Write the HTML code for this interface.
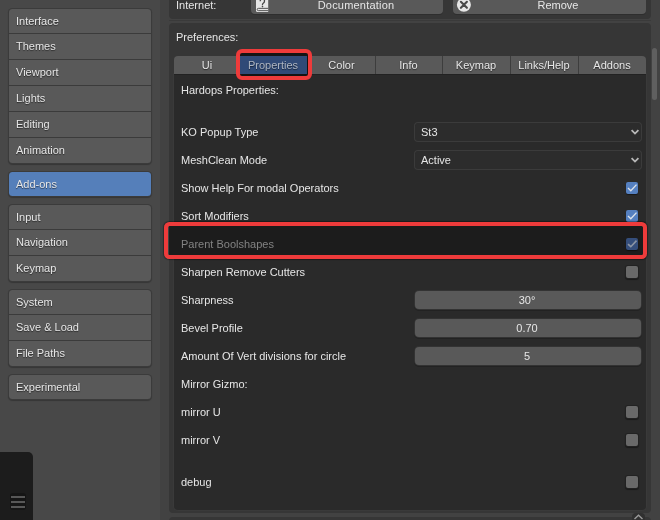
<!DOCTYPE html>
<html><head><meta charset="utf-8"><style>
html,body{margin:0;padding:0;width:660px;height:520px;overflow:hidden;background:#424242;}
.r{position:absolute;}
.t{position:absolute;will-change:transform;font-family:"Liberation Sans",sans-serif;font-size:11px;line-height:12px;white-space:nowrap;}
</style></head><body>
<div class="r" style="left:0px;top:0px;width:160px;height:520px;background:#484848;"></div>
<div class="r" style="left:160px;top:0px;width:500px;height:520px;background:#424242;"></div>
<div class="r" style="left:169px;top:-10px;width:482px;height:28.5px;background:#363636;border-radius:0 0 4px 4px;"></div>
<div class="r" style="left:169px;top:22.5px;width:482px;height:490.5px;background:#363636;border-radius:4px;"></div>
<div class="r" style="left:169px;top:19.8px;width:482px;height:1.2px;background:#3a3a3a;"></div>
<div class="r" style="left:169px;top:517px;width:482px;height:20px;background:#363636;border-radius:4px;"></div>
<div class="r" style="left:9px;top:9px;width:142px;height:154px;background:#595959;border-radius:3.5px;box-shadow:0 0 0 1px #3b3b3b, 0 1px 1px 1px rgba(0,0,0,.25);"></div>
<div class="t" style="left:15.5px;top:15px;color:#e6e6e6;text-shadow:0 1px 1px rgba(0,0,0,.55);">Interface</div>
<div class="r" style="left:9px;top:33px;width:142px;height:1px;background:#3b3b3b;"></div>
<div class="t" style="left:15.5px;top:40px;color:#e6e6e6;text-shadow:0 1px 1px rgba(0,0,0,.55);">Themes</div>
<div class="r" style="left:9px;top:59px;width:142px;height:1px;background:#3b3b3b;"></div>
<div class="t" style="left:15.5px;top:66px;color:#e6e6e6;text-shadow:0 1px 1px rgba(0,0,0,.55);">Viewport</div>
<div class="r" style="left:9px;top:85px;width:142px;height:1px;background:#3b3b3b;"></div>
<div class="t" style="left:15.5px;top:92px;color:#e6e6e6;text-shadow:0 1px 1px rgba(0,0,0,.55);">Lights</div>
<div class="r" style="left:9px;top:111px;width:142px;height:1px;background:#3b3b3b;"></div>
<div class="t" style="left:15.5px;top:118px;color:#e6e6e6;text-shadow:0 1px 1px rgba(0,0,0,.55);">Editing</div>
<div class="r" style="left:9px;top:137px;width:142px;height:1px;background:#3b3b3b;"></div>
<div class="t" style="left:15.5px;top:144px;color:#e6e6e6;text-shadow:0 1px 1px rgba(0,0,0,.55);">Animation</div>
<div class="r" style="left:9px;top:172px;width:142px;height:24px;background:#557fba;border-radius:3.5px;box-shadow:0 0 0 1px #3b3b3b, 0 1px 1px 1px rgba(0,0,0,.25);"></div>
<div class="t" style="left:15.5px;top:178px;color:#e6e6e6;text-shadow:0 1px 1px rgba(0,0,0,.55);">Add-ons</div>
<div class="r" style="left:9px;top:205px;width:142px;height:76px;background:#595959;border-radius:3.5px;box-shadow:0 0 0 1px #3b3b3b, 0 1px 1px 1px rgba(0,0,0,.25);"></div>
<div class="t" style="left:15.5px;top:211px;color:#e6e6e6;text-shadow:0 1px 1px rgba(0,0,0,.55);">Input</div>
<div class="r" style="left:9px;top:229px;width:142px;height:1px;background:#3b3b3b;"></div>
<div class="t" style="left:15.5px;top:236px;color:#e6e6e6;text-shadow:0 1px 1px rgba(0,0,0,.55);">Navigation</div>
<div class="r" style="left:9px;top:255px;width:142px;height:1px;background:#3b3b3b;"></div>
<div class="t" style="left:15.5px;top:262px;color:#e6e6e6;text-shadow:0 1px 1px rgba(0,0,0,.55);">Keymap</div>
<div class="r" style="left:9px;top:290px;width:142px;height:76px;background:#595959;border-radius:3.5px;box-shadow:0 0 0 1px #3b3b3b, 0 1px 1px 1px rgba(0,0,0,.25);"></div>
<div class="t" style="left:15.5px;top:296px;color:#e6e6e6;text-shadow:0 1px 1px rgba(0,0,0,.55);">System</div>
<div class="r" style="left:9px;top:314px;width:142px;height:1px;background:#3b3b3b;"></div>
<div class="t" style="left:15.5px;top:321px;color:#e6e6e6;text-shadow:0 1px 1px rgba(0,0,0,.55);">Save &amp; Load</div>
<div class="r" style="left:9px;top:340px;width:142px;height:1px;background:#3b3b3b;"></div>
<div class="t" style="left:15.5px;top:347px;color:#e6e6e6;text-shadow:0 1px 1px rgba(0,0,0,.55);">File Paths</div>
<div class="r" style="left:9px;top:375px;width:142px;height:24px;background:#595959;border-radius:3.5px;box-shadow:0 0 0 1px #3b3b3b, 0 1px 1px 1px rgba(0,0,0,.25);"></div>
<div class="t" style="left:15.5px;top:381px;color:#e6e6e6;text-shadow:0 1px 1px rgba(0,0,0,.55);">Experimental</div>
<div class="r" style="left:0px;top:452px;width:33px;height:80px;background:#1c1c1c;border-radius:0 5px 0 0;"></div>
<div class="r" style="left:9.5px;top:493px;width:16.5px;height:17px;background:#151515;border-radius:3px;"></div>
<div class="r" style="left:11px;top:496px;width:14px;height:2px;background:#575757;"></div>
<div class="r" style="left:11px;top:501px;width:14px;height:2px;background:#575757;"></div>
<div class="r" style="left:11px;top:506px;width:14px;height:2px;background:#575757;"></div>
<div class="t" style="left:176px;top:-1px;color:#e6e6e6;">Internet:</div>
<div class="r" style="left:251px;top:-6px;width:192px;height:20px;background:#595959;border-radius:4px;box-shadow:0 1px 0 0 #2e2e2e;"></div>
<div class="r" style="left:453px;top:-6px;width:193px;height:20px;background:#595959;border-radius:4px;box-shadow:0 1px 0 0 #2e2e2e;"></div>
<div class="t" style="left:295.7px;width:120px;text-align:center;top:-1px;color:#e6e6e6;letter-spacing:0.2px;">Documentation</div>
<div class="t" style="left:508.0px;width:100px;text-align:center;top:-1px;color:#e6e6e6;">Remove</div>
<svg class="r" style="left:252px;top:0px" width="20" height="16" viewBox="0 0 20 16">
<path d="M4 -3 H16.2 V12 H5.6 Q4 12 4 10.4 Z" fill="#e6e6e6"/>
<path d="M16.2 8.35 H6.4 Q5.2 8.35 5.2 9.5 Q5.2 10.65 6.4 10.65 H16.2" fill="none" stroke="#4a4a4a" stroke-width="0.95"/>
<path d="M8.2 1.2 Q8.4 -1.2 10.5 -1.2 Q12.5 -1.2 12.5 0.9 Q12.5 2.4 11.2 3.3 Q10.4 3.9 10.4 5.2" fill="none" stroke="#474747" stroke-width="1.3"/>
<circle cx="10.5" cy="6.6" r="0.8" fill="#474747"/>
</svg>
<svg class="r" style="left:456px;top:-3px" width="16" height="16" viewBox="0 0 16 16">
<circle cx="7.9" cy="7.8" r="7" fill="#e6e6e6"/>
<path d="M4.9 4.8 L10.9 10.8 M10.9 4.8 L4.9 10.8" stroke="#484848" stroke-width="2.1" stroke-linecap="round"/>
</svg>
<div class="t" style="left:176px;top:31px;color:#e6e6e6;">Preferences:</div>
<div class="r" style="left:174px;top:74px;width:472px;height:436px;background:#2a2a2a;border-radius:0 0 4px 4px;box-shadow:0 0 0 1px #3a3a3a;"></div>
<div class="r" style="left:174px;top:56px;width:472px;height:18px;background:#595959;border-radius:4px 4px 0 0;"></div>
<div class="r" style="left:174px;top:74px;width:472px;height:1px;background:#222222;"></div>
<div class="t" style="left:173.5px;width:66px;text-align:center;top:59px;color:#e6e6e6;text-shadow:0 1px 1px rgba(0,0,0,.55);">Ui</div>
<div class="r" style="left:240px;top:56px;width:1px;height:18px;background:#3d3d3d;"></div>
<div class="r" style="left:238px;top:51px;width:72px;height:27px;background:#141414;"></div>
<div class="r" style="left:240px;top:56px;width:67px;height:18px;background:#304a77;"></div>
<div class="t" style="left:238.5px;width:68px;text-align:center;top:59px;color:#adb5c1;text-shadow:0 1px 1px rgba(0,0,0,.55);">Properties</div>
<div class="r" style="left:308px;top:56px;width:1px;height:18px;background:#3d3d3d;"></div>
<div class="t" style="left:307.5px;width:67px;text-align:center;top:59px;color:#e6e6e6;text-shadow:0 1px 1px rgba(0,0,0,.55);">Color</div>
<div class="r" style="left:375px;top:56px;width:1px;height:18px;background:#3d3d3d;"></div>
<div class="t" style="left:374.5px;width:67px;text-align:center;top:59px;color:#e6e6e6;text-shadow:0 1px 1px rgba(0,0,0,.55);">Info</div>
<div class="r" style="left:442px;top:56px;width:1px;height:18px;background:#3d3d3d;"></div>
<div class="t" style="left:441.5px;width:68px;text-align:center;top:59px;color:#e6e6e6;text-shadow:0 1px 1px rgba(0,0,0,.55);">Keymap</div>
<div class="r" style="left:510px;top:56px;width:1px;height:18px;background:#3d3d3d;"></div>
<div class="t" style="left:509.5px;width:68px;text-align:center;top:59px;color:#e6e6e6;text-shadow:0 1px 1px rgba(0,0,0,.55);">Links/Help</div>
<div class="r" style="left:578px;top:56px;width:1px;height:18px;background:#3d3d3d;"></div>
<div class="t" style="left:577.5px;width:68px;text-align:center;top:59px;color:#e6e6e6;text-shadow:0 1px 1px rgba(0,0,0,.55);">Addons</div>
<div class="t" style="left:181px;top:84px;color:#e6e6e6;">Hardops Properties:</div>
<div class="t" style="left:180.5px;top:126px;color:#e6e6e6;">KO Popup Type</div>
<div class="t" style="left:180.5px;top:154px;color:#e6e6e6;">MeshClean Mode</div>
<div class="t" style="left:180.5px;top:182px;color:#e6e6e6;">Show Help For modal Operators</div>
<div class="t" style="left:180.5px;top:210px;color:#e6e6e6;">Sort Modifiers</div>
<div class="r" style="left:168.5px;top:226px;width:474.5px;height:29px;background:#1c1c1c;"></div>
<div class="t" style="left:180.5px;top:238px;color:#838383;">Parent Boolshapes</div>
<div class="t" style="left:180.5px;top:266px;color:#e6e6e6;">Sharpen Remove Cutters</div>
<div class="t" style="left:180.5px;top:294px;color:#e6e6e6;">Sharpness</div>
<div class="t" style="left:180.5px;top:322px;color:#e6e6e6;">Bevel Profile</div>
<div class="t" style="left:180.5px;top:350px;color:#e6e6e6;">Amount Of Vert divisions for circle</div>
<div class="t" style="left:180.5px;top:378px;color:#e6e6e6;">Mirror Gizmo:</div>
<div class="t" style="left:180.5px;top:406px;color:#e6e6e6;">mirror U</div>
<div class="t" style="left:180.5px;top:434px;color:#e6e6e6;">mirror V</div>
<div class="t" style="left:180.5px;top:476px;color:#e6e6e6;">debug</div>
<div class="r" style="left:414px;top:122px;width:227.5px;height:20px;background:#2c2c2c;border-radius:4px;box-shadow:inset 0 0 0 1px #3b3b3b;"></div>
<div class="t" style="left:420.5px;top:126px;color:#e6e6e6;">St3</div>
<svg class="r" style="left:630px;top:129px" width="10" height="7" viewBox="0 0 10 7"><path d="M1.6 1.2 L5 4.6 L8.4 1.2" fill="none" stroke="#b8b8b8" stroke-width="1.8"/></svg>
<div class="r" style="left:414px;top:150px;width:227.5px;height:20px;background:#2c2c2c;border-radius:4px;box-shadow:inset 0 0 0 1px #3b3b3b;"></div>
<div class="t" style="left:420.5px;top:154px;color:#e6e6e6;">Active</div>
<svg class="r" style="left:630px;top:157px" width="10" height="7" viewBox="0 0 10 7"><path d="M1.6 1.2 L5 4.6 L8.4 1.2" fill="none" stroke="#b8b8b8" stroke-width="1.8"/></svg>
<div class="r" style="left:626px;top:182px;width:12px;height:12px;background:#5580c0;border-radius:2px;box-shadow:0 1px 1px rgba(0,0,0,.45);"></div>
<svg class="r" style="left:626px;top:182px" width="12" height="12" viewBox="0 0 12 12"><path d="M2 6.1 L4.8 8.7 L10.5 2.6" fill="none" stroke="#dce2ea" stroke-width="1.35"/></svg>
<div class="r" style="left:626px;top:210px;width:12px;height:12px;background:#5580c0;border-radius:2px;box-shadow:0 1px 1px rgba(0,0,0,.45);"></div>
<svg class="r" style="left:626px;top:210px" width="12" height="12" viewBox="0 0 12 12"><path d="M2 6.1 L4.8 8.7 L10.5 2.6" fill="none" stroke="#dce2ea" stroke-width="1.35"/></svg>
<div class="r" style="left:626px;top:238px;width:12px;height:12px;background:#354e7b;border-radius:2px;box-shadow:0 1px 1px rgba(0,0,0,.45);"></div>
<svg class="r" style="left:626px;top:238px" width="12" height="12" viewBox="0 0 12 12"><path d="M2 6.1 L4.8 8.7 L10.5 2.6" fill="none" stroke="#8c95a4" stroke-width="1.6"/></svg>
<div class="r" style="left:626px;top:266px;width:12px;height:12px;background:#696969;border-radius:2px;box-shadow:0 0 0 1px #222, 0 1px 1px 1px rgba(0,0,0,.4);"></div>
<div class="r" style="left:626px;top:406px;width:12px;height:12px;background:#696969;border-radius:2px;box-shadow:0 0 0 1px #222, 0 1px 1px 1px rgba(0,0,0,.4);"></div>
<div class="r" style="left:626px;top:434px;width:12px;height:12px;background:#696969;border-radius:2px;box-shadow:0 0 0 1px #222, 0 1px 1px 1px rgba(0,0,0,.4);"></div>
<div class="r" style="left:626px;top:476px;width:12px;height:12px;background:#696969;border-radius:2px;box-shadow:0 0 0 1px #222, 0 1px 1px 1px rgba(0,0,0,.4);"></div>
<div class="r" style="left:415px;top:291px;width:226px;height:18px;background:#595959;border-radius:4px;box-shadow:0 0 0 1px #333, 0 1px 0 1px #222;"></div>
<div class="t" style="left:477.0px;width:100px;text-align:center;top:294px;color:#e6e6e6;">30°</div>
<div class="r" style="left:415px;top:319px;width:226px;height:18px;background:#595959;border-radius:4px;box-shadow:0 0 0 1px #333, 0 1px 0 1px #222;"></div>
<div class="t" style="left:477.0px;width:100px;text-align:center;top:322px;color:#e6e6e6;">0.70</div>
<div class="r" style="left:415px;top:347px;width:226px;height:18px;background:#595959;border-radius:4px;box-shadow:0 0 0 1px #333, 0 1px 0 1px #222;"></div>
<div class="t" style="left:477.0px;width:100px;text-align:center;top:350px;color:#e6e6e6;">5</div>
<div class="r" style="left:164px;top:222px;width:483px;height:37px;box-sizing:border-box;border:4.5px solid #ee3b3b;border-radius:5.5px;box-shadow:0 0 1px 0.5px rgba(0,0,0,.35);"></div>
<div class="r" style="left:236px;top:49px;width:76px;height:31px;box-sizing:border-box;border:4px solid #ee3b3b;border-radius:6px;"></div>
<div class="r" style="left:652px;top:48px;width:5px;height:52px;background:#5f5f5f;border-radius:3px;"></div>
<div class="r" style="left:632px;top:513px;width:13px;height:10px;background:#303030;border-radius:4px;"></div>
<svg class="r" style="left:633px;top:514px" width="11" height="6" viewBox="0 0 11 6"><path d="M1.5 5 L5.5 1.2 L9.5 5" fill="none" stroke="#9a9a9a" stroke-width="1.4"/></svg>
</body></html>
